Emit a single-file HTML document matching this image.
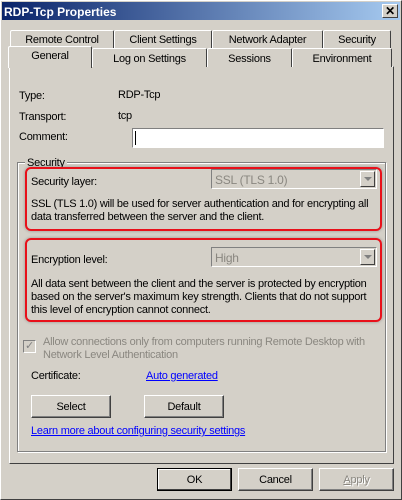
<!DOCTYPE html>
<html><head><style>
*{margin:0;padding:0;box-sizing:border-box}
body{width:402px;height:500px;background:#d4d0c8;font-family:"Liberation Sans",sans-serif;font-size:11px;letter-spacing:-0.25px;color:#000;position:relative;overflow:hidden}
.a{position:absolute;white-space:nowrap}
.t{margin-top:2px}
.win{position:absolute;left:0;top:0;width:402px;height:500px;border:1px solid #fff;border-right-color:#404040;border-bottom-color:#404040}
.title{position:absolute;left:2px;top:2px;width:398px;height:18px;background:linear-gradient(90deg,#0a246a,#a6caf0);color:#fff;font-weight:bold;font-size:12px;padding:3px 0 0 2px;letter-spacing:0}
.close{position:absolute;left:382px;top:4px;width:16px;height:14px;background:#d4d0c8;border:1px solid #fff;border-right-color:#404040;border-bottom-color:#404040;color:#000;font-weight:bold;font-size:12px;text-align:center;line-height:12px}
.tab{position:absolute;height:18px;border:1px solid #fff;border-bottom:none;border-right:1px solid #404040;border-radius:2px 2px 0 0;text-align:center;line-height:19px;background:#d4d0c8}
.panel{position:absolute;left:9px;top:66px;width:385px;height:398px;border:1px solid #fff;border-right-color:#404040;border-bottom-color:#404040}
.btn{position:absolute;height:23px;border:1px solid #fff;border-right-color:#404040;border-bottom-color:#404040;box-shadow:inset -1px -1px 0 #808080;text-align:center;line-height:22px;background:#d4d0c8}
.red{position:absolute;border:2px solid #e8101a;border-radius:6px;box-shadow:0 0 3px rgba(0,0,0,.3)}
.combo{position:absolute;height:20px;border:1px solid #808080;border-right-color:#fff;border-bottom-color:#fff;color:#8a8780;padding:3px 3px;font-size:12px}
.combo i{position:absolute;right:1px;top:1px;width:15px;height:16px;border:1px solid #fff;border-right-color:#404040;border-bottom-color:#404040;}
.combo i:after{content:"";position:absolute;left:3px;top:5px;border-left:4px solid transparent;border-right:4px solid transparent;border-top:4px solid #808080}
.link{color:#0000ff;text-decoration:underline}
</style></head><body>
<div class="win"></div>
<div class="title">RDP-Tcp Properties</div>
<div class="close">✕</div>

<div class="tab" style="left:10px;top:30px;width:104px">Remote Control</div>
<div class="tab" style="left:114px;top:30px;width:98px">Client Settings</div>
<div class="tab" style="left:212px;top:30px;width:111px">Network Adapter</div>
<div class="tab" style="left:323px;top:30px;width:68px">Security</div>
<div class="panel"></div>
<div class="tab" style="left:92px;top:48px;width:115px;height:19px;line-height:20px">Log on Settings</div>
<div class="tab" style="left:207px;top:48px;width:85px;height:19px;line-height:20px">Sessions</div>
<div class="tab" style="left:292px;top:48px;width:100px;height:19px;line-height:20px">Environment</div>
<div class="tab" style="left:8px;top:46px;width:84px;height:22px;line-height:18px;border-bottom:none;z-index:2">General</div>

<div class="a" style="left:19px;top:90px">Type:</div>
<div class="a" style="left:118px;top:89px">RDP-Tcp</div>
<div class="a" style="left:19px;top:111px">Transport:</div>
<div class="a" style="left:118px;top:110px">tcp</div>
<div class="a" style="left:19px;top:131px">Comment:</div>
<div class="a" style="left:132px;top:128px;width:252px;height:20px;background:#fff;border:1px solid #808080;border-right-color:#fff;border-bottom-color:#fff"><div style="position:absolute;left:2px;top:2px;width:1px;height:14px;background:#000"></div></div>

<div class="a" style="left:17px;top:162px;width:369px;height:290px;border:1px solid #808080;box-shadow:1px 1px 0 #fff, inset 1px 1px 0 #fff"></div>
<div class="a" style="left:25px;top:157px;padding:0 2px;background:#d4d0c8">Security</div>

<div class="red" style="left:25px;top:167px;width:357px;height:64px"></div>
<div class="a" style="left:31px;top:176px">Security layer:</div>
<div class="combo" style="left:211px;top:169px;width:166px">SSL (TLS 1.0)<i></i></div>
<div class="a" style="left:31px;top:198px;line-height:13px">SSL (TLS 1.0) will be used for server authentication and for encrypting all<br>data transferred between the server and the client.</div>

<div class="red" style="left:25px;top:238px;width:357px;height:84px"></div>
<div class="a" style="left:31px;top:254px">Encryption level:</div>
<div class="combo" style="left:211px;top:247px;width:166px">High<i></i></div>
<div class="a" style="left:31px;top:278px;line-height:13px">All data sent between the client and the server is protected by encryption<br>based on the server's maximum key strength. Clients that do not support<br>this level of encryption cannot connect.</div>

<div class="a" style="left:23px;top:340px;width:13px;height:13px;border:1px solid #808080;border-right-color:#fff;border-bottom-color:#fff;color:#808080;font-size:11px;line-height:11px;text-align:center">✓</div>
<div class="a" style="left:43px;top:336px;line-height:13px;color:#8a8780">Allow connections only from computers running Remote Desktop with<br>Network Level Authentication</div>

<div class="a" style="left:31px;top:370px">Certificate:</div>
<div class="a link" style="left:146px;top:370px">Auto generated</div>
<div class="btn" style="left:31px;top:395px;width:80px">Select</div>
<div class="btn" style="left:144px;top:395px;width:80px">Default</div>
<div class="a link" style="left:31px;top:425px">Learn more about configuring security settings</div>

<div class="btn" style="left:157px;top:468px;width:75px;border:1px solid #000;box-shadow:inset -1px -1px 0 #404040,inset 1px 1px 0 #fff">OK</div>
<div class="btn" style="left:238px;top:468px;width:75px">Cancel</div>
<div class="btn" style="left:319px;top:468px;width:75px;color:#8a8780;text-shadow:1px 1px 0 #fff"><u>A</u>pply</div>
</body></html>
